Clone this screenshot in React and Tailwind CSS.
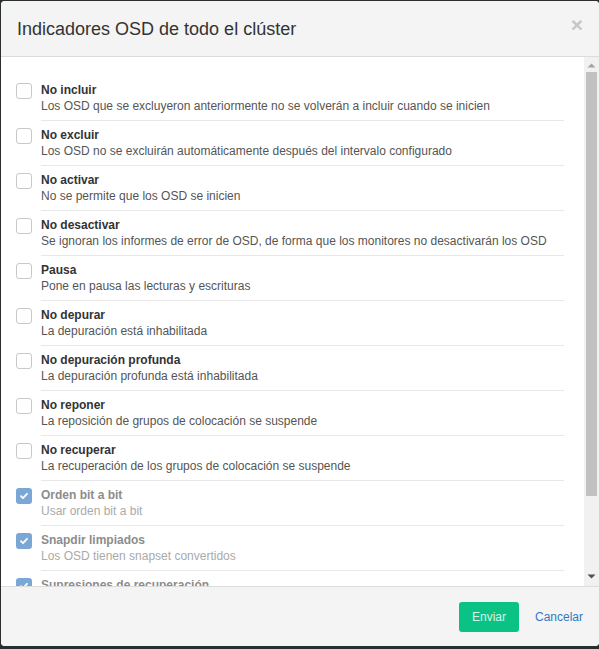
import React from 'react';

const flags = [
  { title: 'No incluir', desc: 'Los OSD que se excluyeron anteriormente no se volverán a incluir cuando se inicien' },
  { title: 'No excluir', desc: 'Los OSD no se excluirán automáticamente después del intervalo configurado' },
  { title: 'No activar', desc: 'No se permite que los OSD se inicien' },
  { title: 'No desactivar', desc: 'Se ignoran los informes de error de OSD, de forma que los monitores no desactivarán los OSD' },
  { title: 'Pausa', desc: 'Pone en pausa las lecturas y escrituras' },
  { title: 'No depurar', desc: 'La depuración está inhabilitada' },
  { title: 'No depuración profunda', desc: 'La depuración profunda está inhabilitada' },
  { title: 'No reponer', desc: 'La reposición de grupos de colocación se suspende' },
  { title: 'No recuperar', desc: 'La recuperación de los grupos de colocación se suspende' },
  { title: 'Orden bit a bit', desc: 'Usar orden bit a bit', checked: true },
  { title: 'Snapdir limpiados', desc: 'Los OSD tienen snapset convertidos', checked: true },
  { title: 'Supresiones de recuperación', desc: 'Los OSD admiten supresiones de recuperación', checked: true },
];

const Checkbox = ({ checked }) =>
  checked ? (
    <span className="mt-[7px] flex h-4 w-4 shrink-0 items-center justify-center rounded-[3px] bg-[#7ba7d6]">
      <svg width="10" height="10" viewBox="0 0 10 10" fill="none">
        <path d="M2 5.2l2 2 4-4.4" stroke="#fff" strokeWidth="1.8" strokeLinecap="round" strokeLinejoin="round" />
      </svg>
    </span>
  ) : (
    <span className="mt-[7px] block h-4 w-4 shrink-0 rounded-[3px] border border-[#c8c8c8] bg-white" />
  );

const FlagRow = ({ flag }) => (
  <div className="flex gap-[9px]">
    <Checkbox checked={flag.checked} />
    <div className="flex-1 border-b border-[#e8e8e8] pt-[6px] pb-[6px]">
      <div className={`text-[12px] font-bold leading-4 ${flag.checked ? 'text-[#8c8c8c]' : 'text-[#333]'}`}>
        {flag.title}
      </div>
      <div className={`text-[12px] leading-4 ${flag.checked ? 'text-[#aaa]' : 'text-[#555]'}`}>{flag.desc}</div>
    </div>
  </div>
);

export default function App() {
  return (
    <div
      className="h-[649px] w-[599px] overflow-hidden bg-[#2b2e2f] pt-[1px] pl-[1px]"
      style={{ fontFamily: '"Liberation Sans", Arial, sans-serif' }}
    >
      <div className="flex h-[645px] w-[598px] flex-col overflow-hidden rounded-[4px] bg-white">
        {/* header */}
        <div className="flex h-[56px] shrink-0 items-center justify-between border-b border-[#dcdcdc] bg-[#f4f4f4] pl-4 pr-[16px]">
          <h4 className="text-[18px] leading-5 text-[#333]">Indicadores OSD de todo el clúster</h4>
          <span className="-mt-[8px] text-[21px] font-bold leading-none text-[#c6c6c6]">×</span>
        </div>

        {/* body */}
        <div className="flex min-h-0 flex-1">
          <div className="flex-1 overflow-hidden pt-[19px] pl-[15px] pr-[20px]">
            {flags.map((f) => (
              <FlagRow key={f.title} flag={f} />
            ))}
          </div>
          <div className="flex w-[15px] shrink-0 flex-col items-center bg-[#f1f1f1]">
            <svg className="mt-[5px]" width="9" height="6" viewBox="0 0 9 6">
              <path d="M0.5 5.5L4.5 1.5L8.5 5.5Z" fill="#a3a3a3" />
            </svg>
            <div className="mt-[4px] h-[424px] w-[11px] bg-[#c1c1c1]" />
            <div className="flex-1" />
            <svg className="mb-[6px]" width="9" height="6" viewBox="0 0 9 6">
              <path d="M0.5 0.5L4.5 4.5L8.5 0.5Z" fill="#505050" />
            </svg>
          </div>
        </div>

        {/* footer */}
        <div className="flex h-[60px] shrink-0 items-center justify-end gap-4 border-t border-[#dcdcdc] bg-[#f4f4f4] pr-[16px]">
          <button className="h-[30px] w-[60px] rounded-[3px] bg-[#0ac283] text-[12px] text-[#d9f5ea]">Enviar</button>
          <button className="text-[12px] text-[#2f7bc4]">Cancelar</button>
        </div>
      </div>
    </div>
  );
}
